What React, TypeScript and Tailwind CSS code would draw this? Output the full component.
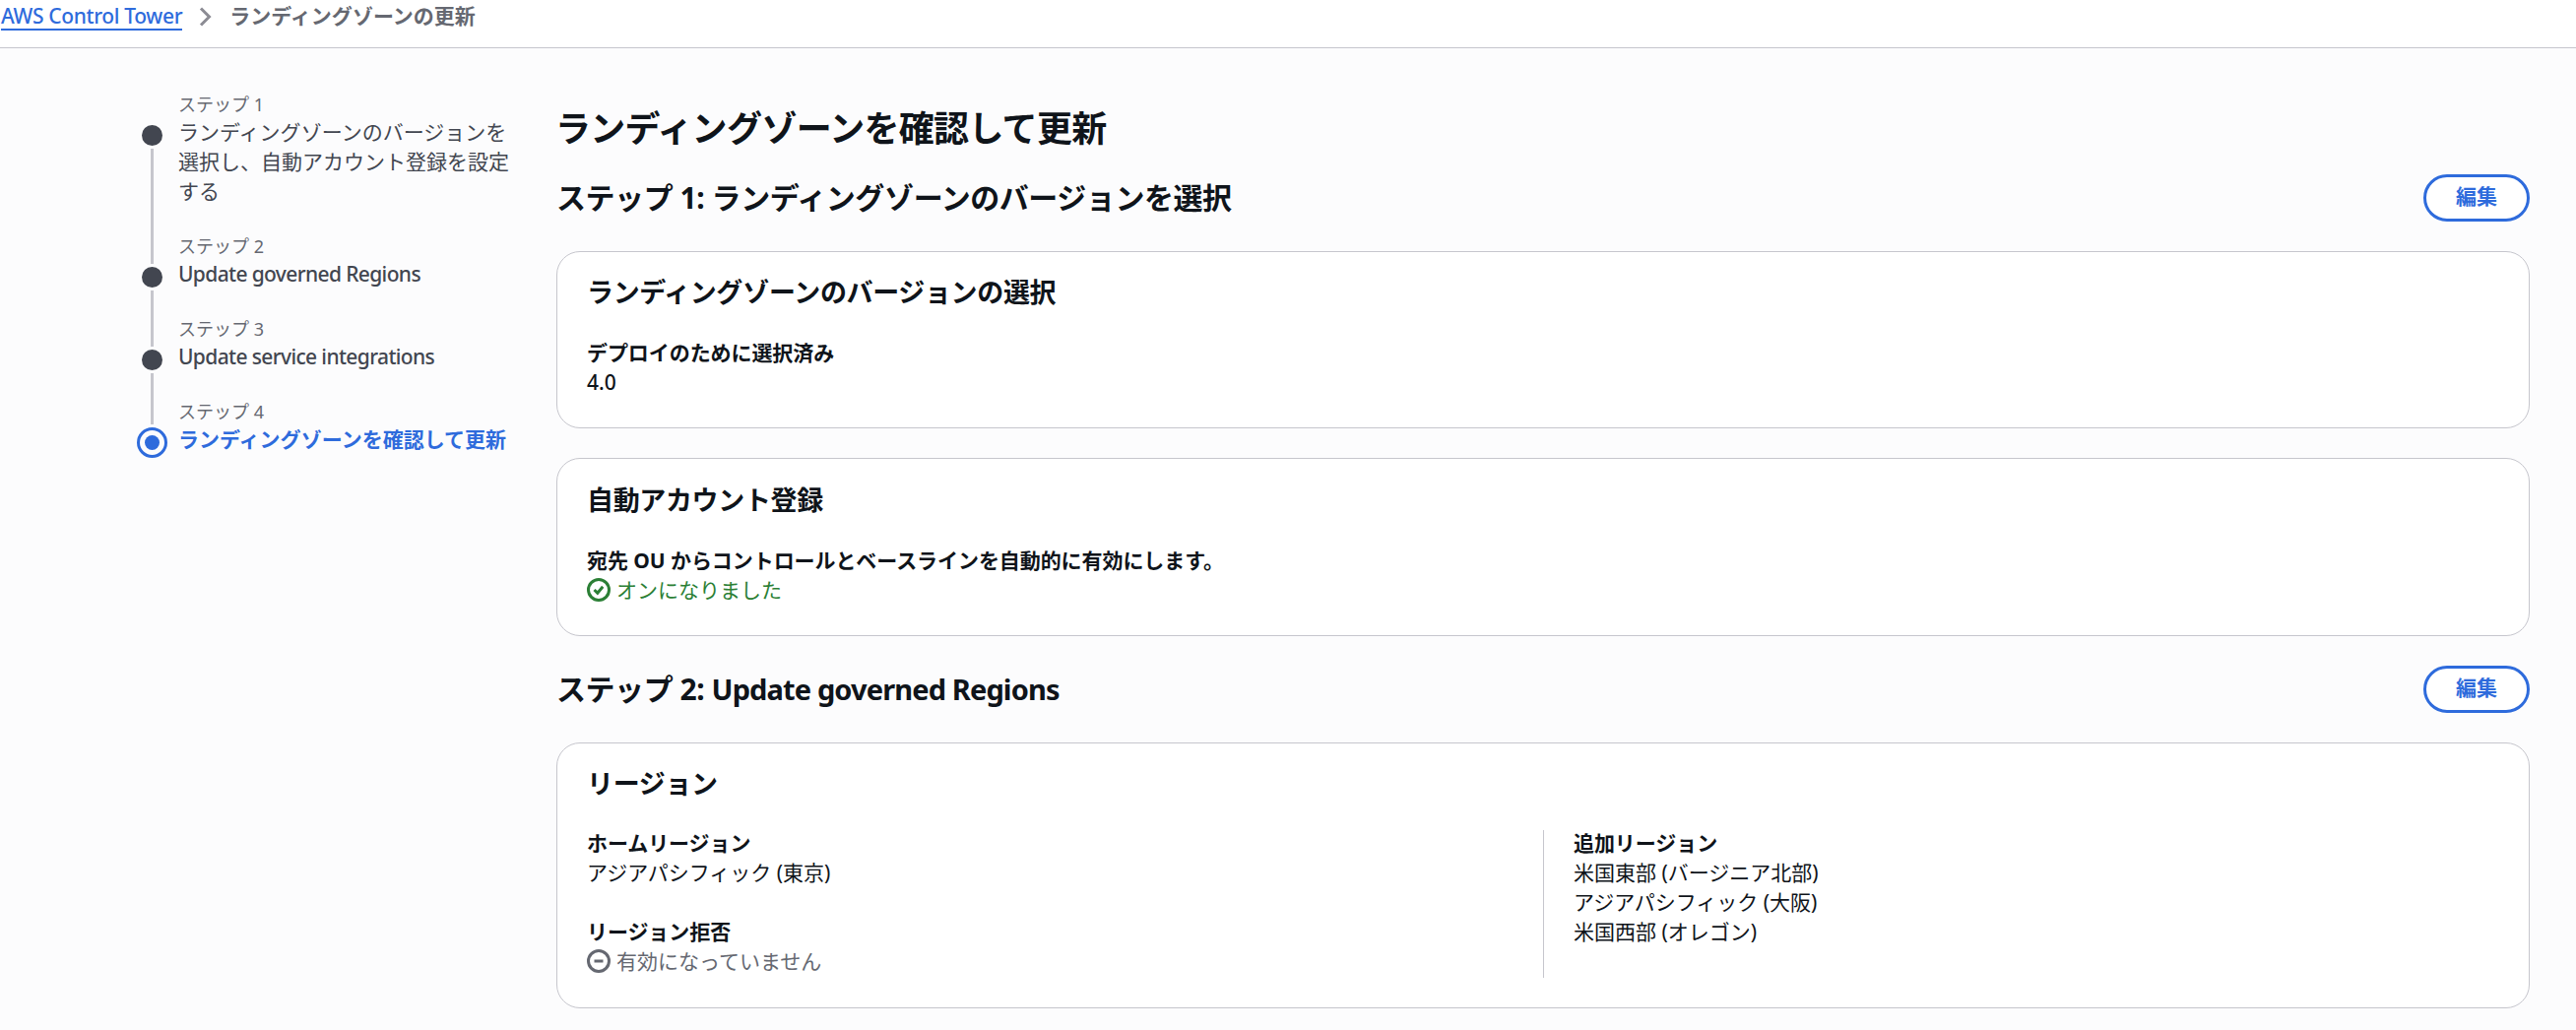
import type { ReactNode } from "react";

type Step = {
  label: string;
  title: string;
  latin?: boolean;
  active?: boolean;
};

const steps: Step[] = [
  {
    label: "ステップ 1",
    title: "ランディングゾーンのバージョンを選択し、自動アカウント登録を設定する",
  },
  { label: "ステップ 2", title: "Update governed Regions", latin: true },
  { label: "ステップ 3", title: "Update service integrations", latin: true },
  { label: "ステップ 4", title: "ランディングゾーンを確認して更新", active: true },
];

const additionalRegions = [
  "米国東部 (バージニア北部)",
  "アジアパシフィック (大阪)",
  "米国西部 (オレゴン)",
];

function Breadcrumbs() {
  return (
    <nav className="flex h-[49px] items-start border-b border-[#c6c6cd] bg-white pl-px">
      <a
        href="#"
        className="mt-px h-[30px] border-b-2 border-[#2e6bdc] font-medium leading-[31px] tracking-[-0.35px] text-[#2e6bdc]"
      >
        AWS Control Tower
      </a>
      <svg
        className="mt-[7px] ml-[17px] h-5 w-3.5"
        viewBox="0 0 14 20"
        fill="none"
        stroke="#8c8c94"
        strokeWidth="3"
      >
        <path d="M2 1.5 10.5 10 2 18.5" />
      </svg>
      <span className="ml-[17px] font-bold leading-[32px] text-[#656871]">
        ランディングゾーンの更新
      </span>
    </nav>
  );
}

function StepMarker({ index, active }: { index: number; active?: boolean }) {
  const isFirst = index === 0;

  return (
    <div className="flex flex-col items-center gap-[3px]">
      {isFirst ? (
        <div className="h-[30px]" />
      ) : (
        <div className={active ? "h-[25px] w-[3px] bg-[#c6c6cd]" : "h-[30px] w-[3px] bg-[#c6c6cd]"} />
      )}

      {active ? (
        <div className="flex size-[31px] items-center justify-center rounded-full border-3 border-[#2e6bdc]">
          <div className="size-[15px] rounded-full bg-[#2e6bdc]" />
        </div>
      ) : (
        <>
          <div className="size-[21px] rounded-full bg-[#424650]" />
          <div className="w-[3px] flex-1 bg-[#c6c6cd]" />
        </>
      )}
    </div>
  );
}

function StepTitle({ step }: { step: Step }) {
  if (step.active) {
    return <p className="font-bold leading-[30px] text-[#2e6bdc]">{step.title}</p>;
  }
  if (step.latin) {
    return (
      <p className="pt-px font-medium leading-[29px] tracking-[-0.63px] text-[#424650]">{step.title}</p>
    );
  }
  return <p className="leading-[30px] text-[#424650]">{step.title}</p>;
}

function StepNavigation() {
  return (
    <ol className="w-[380px] shrink-0 pt-[45px]">
      {steps.map((step, index) => (
        <li key={step.label} className="grid grid-cols-[31px_1fr] gap-x-[11px]">
          <StepMarker index={index} active={step.active} />
          <div className="pb-[29px]">
            <p className="mb-px h-[24px] text-lg leading-[24px] text-[#656871]">{step.label}</p>
            <StepTitle step={step} />
          </div>
        </li>
      ))}
    </ol>
  );
}

function SectionHeader({ children }: { children: ReactNode }) {
  return (
    <div className="flex h-12 items-center justify-between">
      <h2 className="text-[30px] font-bold leading-[36px] tracking-[-0.45px]">{children}</h2>
      <button className="h-12 w-[108px] rounded-full border-3 border-[#2e6bdc] bg-white pb-0.5 font-bold text-[#2e6bdc]">
        編集
      </button>
    </div>
  );
}

function Card({ title, className, children }: { title: string; className: string; children: ReactNode }) {
  return (
    <section className={`rounded-[24px] border border-[#c6c6cd] bg-white px-[30px] ${className}`}>
      <h3 className="mb-[29px] text-[27px] font-bold leading-[36px] tracking-[-0.35px]">{title}</h3>
      {children}
    </section>
  );
}

function Field({ label, children }: { label: string; children: ReactNode }) {
  return (
    <div className="leading-[30px]">
      <p className="font-bold tracking-[-0.07px]">{label}</p>
      {children}
    </div>
  );
}

function StatusOn({ children }: { children: ReactNode }) {
  return (
    <div className="flex items-center gap-[6px] text-[#2b7f35]">
      <svg className="size-6" viewBox="0 0 24 24" fill="none" stroke="currentColor" strokeWidth="3">
        <circle cx="12" cy="12" r="10.5" />
        <path d="m7.5 12 3.3 3.2 5.4-6.4" />
      </svg>
      <p>{children}</p>
    </div>
  );
}

function StatusOff({ children }: { children: ReactNode }) {
  return (
    <div className="flex items-center gap-[6px] text-[#656871]">
      <svg className="size-6" viewBox="0 0 24 24" fill="none" stroke="currentColor" strokeWidth="3">
        <circle cx="12" cy="12" r="10.5" />
        <path d="M7.5 12h9" />
      </svg>
      <p>{children}</p>
    </div>
  );
}

export default function App() {
  return (
    <div
      lang="ja"
      className="h-[1046px] overflow-hidden bg-[#fcfcfd] font-['Noto_Sans','Noto_Sans_CJK_JP',sans-serif] text-[21px] text-[#0f141a]"
    >
      <Breadcrumbs />

      <div className="flex pr-[47px] pl-[139px]">
        <StepNavigation />

        <main className="ml-[46px] flex-1 pt-[58px]">
          <h1 className="-ml-px mb-[22px] text-[36px] font-bold leading-[48px] tracking-[-0.72px]">
            ランディングゾーンを確認して更新
          </h1>

          {/* Step 1 */}
          <SectionHeader>ステップ 1: ランディングゾーンのバージョンを選択</SectionHeader>
          <Card title="ランディングゾーンのバージョンの選択" className="mt-[30px] h-[180px] pt-[23px]">
            <div className="-mt-px">
              <Field label="デプロイのために選択済み">
                <p className="font-medium">4.0</p>
              </Field>
            </div>
          </Card>
          <Card title="自動アカウント登録" className="mt-[30px] h-[181px] pt-[24px]">
            <div className="-mt-px">
              <Field label="宛先 OU からコントロールとベースラインを自動的に有効にします。">
                <StatusOn>オンになりました</StatusOn>
              </Field>
            </div>
          </Card>

          {/* Step 2 */}
          <div className="mt-[30px]">
            <SectionHeader>
              ステップ 2: <span className="text-[29px] tracking-[-0.87px]">Update governed Regions</span>
            </SectionHeader>
          </div>
          <Card title="リージョン" className="mt-[30px] h-[270px] pt-[23px]">
            <div className="grid h-[150px] grid-cols-2">
              <div className="-mt-[2px] flex flex-col gap-[30px]">
                <Field label="ホームリージョン">
                  <p>アジアパシフィック (東京)</p>
                </Field>
                <Field label="リージョン拒否">
                  <StatusOff>有効になっていません</StatusOff>
                </Field>
              </div>
              <div className="border-l border-[#c6c6cd] pl-[30px]">
                <div className="-mt-[2px]">
                  <Field label="追加リージョン">
                    {additionalRegions.map((region) => (
                      <p key={region}>{region}</p>
                    ))}
                  </Field>
                </div>
              </div>
            </div>
          </Card>
        </main>
      </div>
    </div>
  );
}
